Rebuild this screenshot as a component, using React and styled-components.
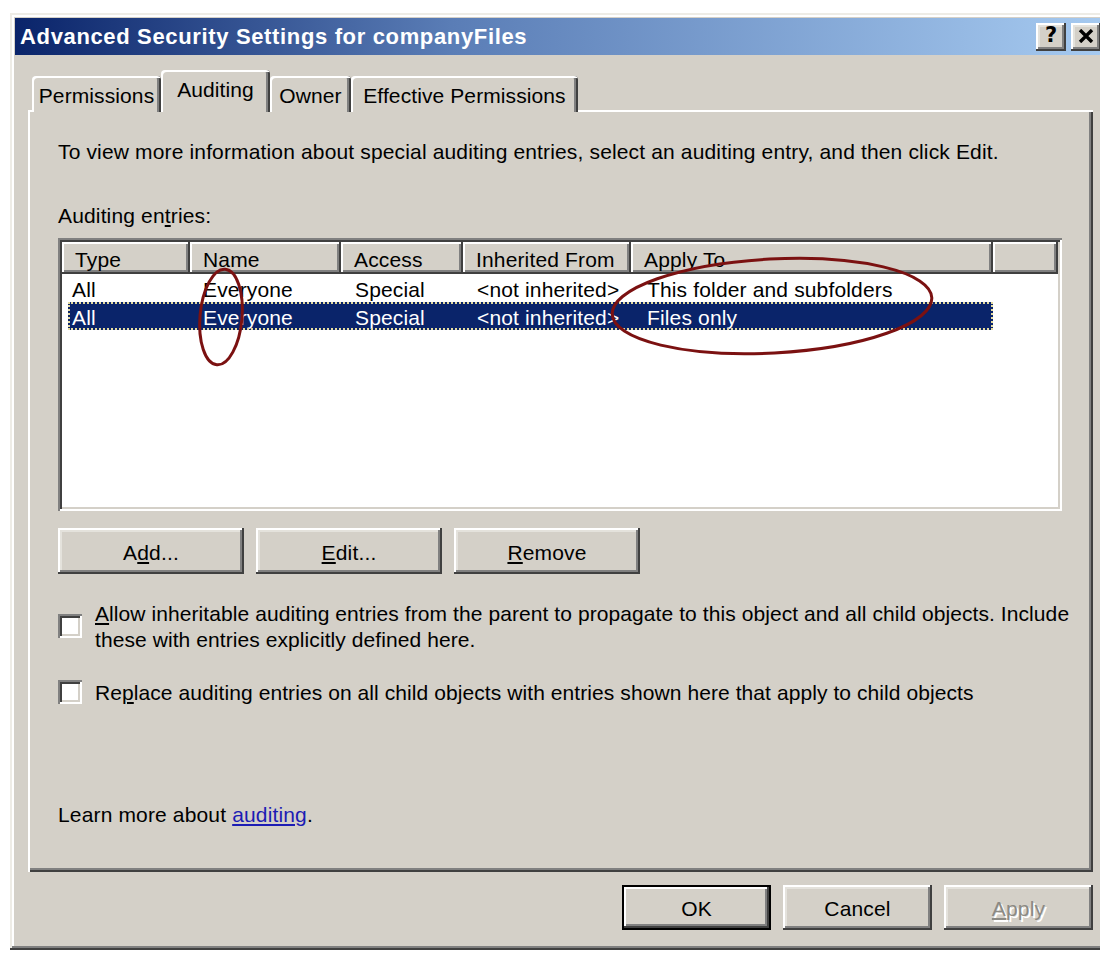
import React from "react";
import styled, { createGlobalStyle, css } from "styled-components";

const FACE = "#d4d0c8";

const GlobalStyle = createGlobalStyle`
  html, body {
    margin: 0;
    padding: 0;
    background: #ffffff;
    overflow: hidden;
  }
  body {
    font-family: "Liberation Sans", Arial, sans-serif;
    color: #000;
  }
`;

const raised = css`
  box-shadow: inset -2px -2px #404040, inset 2px 2px #ffffff,
    inset -4px -4px #808080, inset 4px 4px #e4e2dc;
`;

const sunken = css`
  box-shadow: inset 2px 2px #808080, inset -2px -2px #ffffff,
    inset 4px 4px #404040, inset -4px -4px ${FACE};
`;

const Page = styled.div`
  position: relative;
  width: 1100px;
  height: 953px;
  padding: 13px 0 0 10px;
  box-sizing: border-box;
`;

const Dialog = styled.div`
  width: 1100px;
  height: 937px;
  box-sizing: border-box;
  padding: 5px;
  background: ${FACE};
  box-shadow: inset -2px -2px #404040, inset 2px 2px #eeece6,
    inset -4px -4px #808080, inset 4px 4px #ffffff;
  display: flex;
  flex-direction: column;
`;

const TitleBar = styled.div`
  height: 37px;
  flex: none;
  display: flex;
  align-items: center;
  justify-content: space-between;
  padding: 0 4px 0 5px;
  background: linear-gradient(to right, #0a246a 0%, #5a7db6 40%, #a6caf0 100%);
`;

const Title = styled.div`
  color: #ffffff;
  font-weight: bold;
  font-size: 22px;
  letter-spacing: 0.65px;
  padding-top: 1px;
`;

const CaptionButtons = styled.div`
  display: flex;
  gap: 5px;
`;

const CaptionButton = styled.div`
  width: 30px;
  height: 28px;
  box-sizing: border-box;
  background: ${FACE};
  ${raised};
  display: flex;
  align-items: center;
  justify-content: center;
  font-family: "DejaVu Sans", sans-serif;
  font-weight: bold;
  font-size: 21px;
  line-height: 1;
  color: #000;
  padding-bottom: 2px;
`;

const Content = styled.div`
  padding: 15px 12px 0 13px;
  display: flex;
  flex-direction: column;
`;

const TabStrip = styled.div`
  display: flex;
  align-items: flex-end;
  height: 42px;
  padding-left: 4px;
  margin-bottom: -2px;
  position: relative;
  z-index: 1;
`;

const Tab = styled.div`
  width: ${(p) => p.$w}px;
  height: ${(p) => (p.$active ? 42 : 36)}px;
  box-sizing: border-box;
  background: ${FACE};
  border-radius: 4px 4px 0 0;
  box-shadow: inset 2px 2px #ffffff, inset -2px 0 #404040,
    inset -4px 0 #808080;
  display: flex;
  align-items: center;
  justify-content: center;
  font-size: 21px;
  letter-spacing: 0.1px;
  padding-top: ${(p) => (p.$active ? 0 : 3)}px;
  padding-bottom: ${(p) => (p.$active ? 2 : 0)}px;
`;

const Panel = styled.div`
  height: 762px;
  box-sizing: border-box;
  padding: 29px 31px 0 30px;
  box-shadow: inset 2px 2px #ffffff, inset -2px -2px #404040,
    inset -4px -4px #808080;
  display: flex;
  flex-direction: column;
  font-size: 21px;
  line-height: 26px;
  letter-spacing: 0.15px;
`;

const Text = styled.div`
  margin-top: ${(p) => p.$mt || 0}px;
  white-space: nowrap;
`;

const ListView = styled.div`
  margin-top: 9px;
  height: 273px;
  box-sizing: border-box;
  padding: 4px;
  background: #ffffff;
  ${sunken};
  display: flex;
  flex-direction: column;
`;

const HeaderRow = styled.div`
  display: flex;
  height: 32px;
  flex: none;
`;

const HeaderCell = styled.div`
  width: ${(p) => (p.$w ? `${p.$w}px` : "auto")};
  flex: ${(p) => (p.$w ? "none" : "1")};
  box-sizing: border-box;
  background: ${FACE};
  box-shadow: inset -2px -2px #404040, inset 2px 2px #ffffff,
    inset -4px -4px #808080;
  padding: 3px 0 0 13px;
  display: flex;
  align-items: center;
  white-space: nowrap;
  overflow: hidden;
`;

const Row = styled.div`
  display: flex;
  height: 28px;
  margin-left: 6px;
  width: 925px;
  align-items: center;
  box-sizing: border-box;
  padding-top: 3px;
  ${(p) =>
    p.$selected &&
    css`
      background: #0a246a;
      color: #ffffff;
      outline: 2px dotted #e6dca0;
      outline-offset: -2px;
    `}
`;

const Cell = styled.div`
  width: ${(p) => p.$w}px;
  flex: none;
  box-sizing: border-box;
  padding-left: ${(p) => p.$pl}px;
  white-space: nowrap;
  overflow: hidden;
`;

const ButtonRow = styled.div`
  display: flex;
  gap: 12px;
  margin-top: ${(p) => p.$mt}px;
`;

const Button = styled.div`
  width: ${(p) => p.$w}px;
  height: ${(p) => p.$h}px;
  box-sizing: border-box;
  padding-top: 3px;
  background: ${FACE};
  ${raised};
  display: flex;
  align-items: center;
  justify-content: center;
  font-size: 21px;
  letter-spacing: 0.15px;
  color: ${(p) => (p.$disabled ? "#8c8a84" : "#000")};
  text-shadow: ${(p) => (p.$disabled ? "2px 2px #ffffff" : "none")};
  ${(p) =>
    p.$default &&
    css`
      box-shadow: inset 0 0 0 2px #000000, inset -4px -4px #404040,
        inset 4px 4px #ffffff, inset -6px -6px #808080;
    `}
`;

const CheckRow = styled.div`
  display: flex;
  align-items: center;
  gap: 13px;
  margin-top: ${(p) => p.$mt}px;
`;

const CheckBox = styled.div`
  width: 24px;
  height: 24px;
  flex: none;
  box-sizing: border-box;
  background: #ffffff;
  ${sunken};
`;

const CheckLabel = styled.div`
  white-space: nowrap;
  padding-top: 3px;
  letter-spacing: 0.08px;
`;

const LearnMore = styled.div`
  margin-top: 94px;
  padding-top: 2px;
  white-space: nowrap;
`;

const Link = styled.span`
  color: #1c1cb4;
  text-decoration: underline;
`;

const Footer = styled.div`
  display: flex;
  justify-content: flex-end;
  gap: 12px;
  margin-top: 13px;
`;

const Annotations = styled.svg`
  position: absolute;
  left: 0;
  top: 0;
  width: 1100px;
  height: 953px;
  pointer-events: none;
  z-index: 10;
`;

const columns = [
  { label: "Type", w: 128 },
  { label: "Name", w: 151 },
  { label: "Access", w: 122 },
  { label: "Inherited From", w: 168 },
  { label: "Apply To", w: 362 },
];

const rows = [
  { cells: ["All", "Everyone", "Special", "<not inherited>", "This folder and subfolders"] },
  { cells: ["All", "Everyone", "Special", "<not inherited>", "Files only"], selected: true },
];

const cellWidths = [122, 151, 122, 168, 362];
const cellPads = [4, 13, 14, 14, 16];

function CloseGlyph() {
  return (
    <svg width="16" height="14" viewBox="0 0 16 14">
      <path d="M2 1 L14 13 M14 1 L2 13" stroke="#000" strokeWidth="3.4" fill="none" />
    </svg>
  );
}

export default function App() {
  return (
    <Page>
      <GlobalStyle />
      <Dialog>
        <TitleBar>
          <Title>Advanced Security Settings for companyFiles</Title>
          <CaptionButtons>
            <CaptionButton>?</CaptionButton>
            <CaptionButton>
              <CloseGlyph />
            </CaptionButton>
          </CaptionButtons>
        </TitleBar>
        <Content>
          <TabStrip>
            <Tab $w={129}>Permissions</Tab>
            <Tab $w={109} $active>
              Auditing
            </Tab>
            <Tab $w={81}>Owner</Tab>
            <Tab $w={227}>Effective Permissions</Tab>
          </TabStrip>
          <Panel>
            <Text>
              To view more information about special auditing entries, select an auditing entry, and then click Edit.
            </Text>
            <Text $mt={38}>
              Auditing en<u>t</u>ries:
            </Text>
            <ListView>
              <HeaderRow>
                {columns.map((c) => (
                  <HeaderCell key={c.label} $w={c.w}>
                    {c.label}
                  </HeaderCell>
                ))}
                <HeaderCell />
              </HeaderRow>
              {rows.map((r, i) => (
                <Row key={i} $selected={r.selected}>
                  {r.cells.map((t, j) => (
                    <Cell key={j} $w={cellWidths[j]} $pl={cellPads[j]}>
                      {t}
                    </Cell>
                  ))}
                </Row>
              ))}
            </ListView>
            <ButtonRow $mt={17}>
              <Button $w={186} $h={46}>
                A<u>d</u>d...
              </Button>
              <Button $w={186} $h={46}>
                <u>E</u>dit...
              </Button>
              <Button $w={186} $h={46}>
                <u>R</u>emove
              </Button>
            </ButtonRow>
            <CheckRow $mt={24}>
              <CheckBox />
              <CheckLabel>
                <u>A</u>llow inheritable auditing entries from the parent to propagate to this object and all child objects. Include
                <br />
                these with entries explicitly defined here.
              </CheckLabel>
            </CheckRow>
            <CheckRow $mt={24}>
              <CheckBox />
              <CheckLabel>
                Re<u>p</u>lace auditing entries on all child objects with entries shown here that apply to child objects
              </CheckLabel>
            </CheckRow>
            <LearnMore>
              Learn more about <Link>auditing</Link>.
            </LearnMore>
          </Panel>
          <Footer>
            <Button $w={149} $h={45} $default>
              OK
            </Button>
            <Button $w={149} $h={45}>
              Cancel
            </Button>
            <Button $w={149} $h={45} $disabled>
              <span>
                <u>A</u>pply
              </span>
            </Button>
          </Footer>
        </Content>
      </Dialog>
      <Annotations viewBox="0 0 1100 953">
        <ellipse cx="221" cy="317" rx="21" ry="48" transform="rotate(5 221 317)" fill="none" stroke="#7b1111" strokeWidth="3" />
        <ellipse cx="772" cy="306" rx="160" ry="47" transform="rotate(-3 772 306)" fill="none" stroke="#7b1111" strokeWidth="3" />
      </Annotations>
    </Page>
  );
}
